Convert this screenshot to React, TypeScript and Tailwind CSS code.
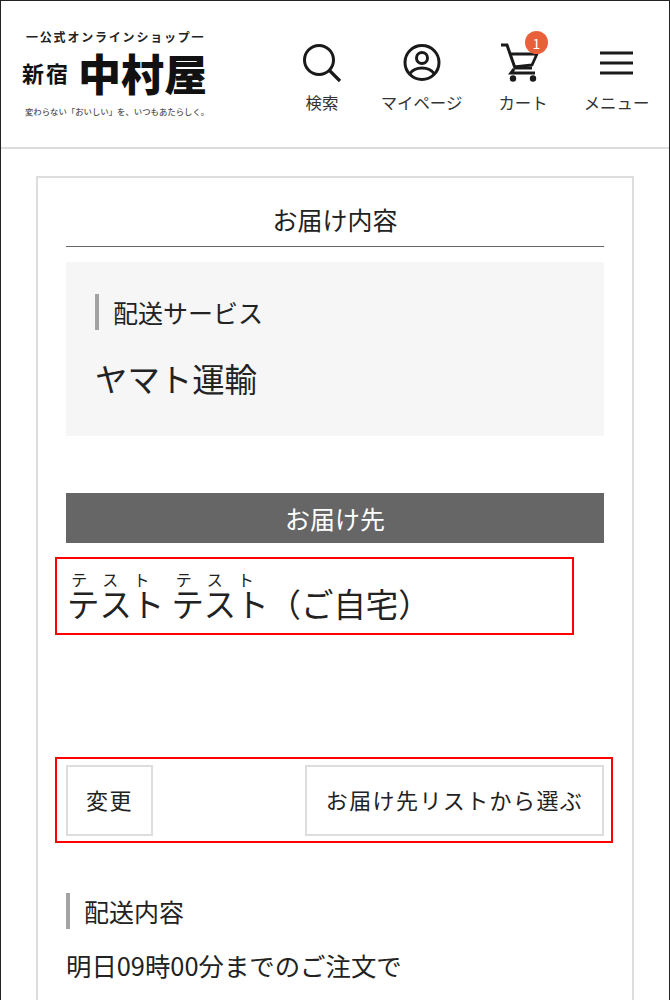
const FONT = "font-['Noto_Sans_CJK_JP','Noto_Sans',sans-serif]"

function SearchIcon() {
  return (
    <svg width="40" height="40" viewBox="0 0 40 40" fill="none" stroke="#1a1a1a" strokeWidth="3">
      <circle cx="17" cy="17" r="14.5" />
      <path d="M27 27 L38 38" strokeWidth="3.2" />
    </svg>
  )
}

function UserIcon() {
  return (
    <svg width="40" height="40" viewBox="0 0 40 40" fill="none" stroke="#1a1a1a" strokeWidth="3">
      <circle cx="20" cy="19.5" r="17" />
      <circle cx="20" cy="15" r="5.5" />
      <path d="M7.5 31 C11 26 16 25 20 25 C24 25 29 26 32.5 31" />
    </svg>
  )
}

function CartIcon() {
  return (
    <svg width="40" height="40" viewBox="3 0 40 40" fill="none" stroke="#1a1a1a" strokeWidth="3" className="overflow-visible">
      <path d="M1 2 H7 L15 25 H32" />
      <path d="M10 11 H37 L32 22 L14 24" strokeWidth="2.8" />
      <path d="M14 26 L11 30 H35" />
      <circle cx="13" cy="35.5" r="3.2" fill="#1a1a1a" stroke="none" />
      <circle cx="33" cy="35.5" r="3.2" fill="#1a1a1a" stroke="none" />
    </svg>
  )
}

function MenuIcon() {
  return (
    <svg width="40" height="40" viewBox="0 0 40 40" fill="none" stroke="#1a1a1a" strokeWidth="3">
      <path d="M3 10 H36 M3 20 H36 M3 30 H36" />
    </svg>
  )
}

function NavItem({ icon, label, badge, width }: { icon: React.ReactNode; label: string; badge?: string; width: string }) {
  return (
    <div className={`flex flex-col items-center ${width}`}>
      <div className="relative h-[40px]">
        {icon}
        {badge && (
          <span className="absolute -top-[12px] left-[22px] flex h-[23px] w-[23px] items-center justify-center rounded-full bg-[#e8603a] text-[14px] leading-none text-white">
            {badge}
          </span>
        )}
      </div>
      <span className="mt-[7px] whitespace-nowrap text-[16.4px] leading-[24px] text-[#333]">{label}</span>
    </div>
  )
}

function Logo() {
  return (
    <div className="flex w-[190px] flex-col text-[#111]">
      <p className="ml-[4px] whitespace-nowrap text-[12px] leading-[16px] font-bold tracking-[1.8px] text-[#222]">一公式オンラインショップ一</p>
      <div className="mt-[5px] flex h-[44px] items-center">
        <span className="text-[22px] font-bold leading-none tracking-[2px]">新宿</span>
        <span className="ml-[8px] text-[43px] leading-none font-black">中村屋</span>
      </div>
      <p className="mt-[11px] ml-[3px] whitespace-nowrap text-[8.4px] leading-[12px] font-medium text-[#555]">変わらない「おいしい」を、いつもあたらしく。</p>
    </div>
  )
}

function SideTitle({ children }: { children: React.ReactNode }) {
  return <h3 className="border-l-[4px] border-[#a3a3a3] pl-[14px] text-[25px] leading-[36px] text-[#222]">{children}</h3>
}

export default function App() {
  return (
    <div className={`${FONT} h-[1000px] overflow-hidden border-x border-t border-[#222] bg-white`}>
      <header className="flex h-[148px] items-start justify-between border-b-2 border-[#ddd] pl-[21px] pt-[28px]">
        <Logo />
        <nav className="flex items-start pt-[14px] pr-[20px]">
          <NavItem icon={<SearchIcon />} label="検索" width="w-[60px]" />
          <NavItem icon={<UserIcon />} label="マイページ" width="ml-[29px] w-[81px]" />
          <NavItem icon={<CartIcon />} label="カート" badge="1" width="ml-[36px] w-[50px]" />
          <NavItem icon={<MenuIcon />} label="メニュー" width="ml-[36px] w-[65px]" />
        </nav>
      </header>

      <main className="px-[35px] pt-[27px]">
        <section className="border-2 border-[#ddd] px-[28px] pb-[40px]">
          <h2 className="border-b border-[#666] pt-[23px] pb-[9px] text-center text-[25px] leading-[36px] text-[#222]">お届け内容</h2>

          <div className="mt-[15px] h-[174px] bg-[#f6f6f6] px-[29px] pt-[32px]">
            <SideTitle>配送サービス</SideTitle>
            <p className="mt-[22px] text-[32.4px] leading-[51px] text-[#222]">ヤマト運輸</p>
          </div>

          <h3 className="mt-[57px] h-[50px] bg-[#666] text-center text-[25px] leading-[50px] text-white">お届け先</h3>

          <div className="-mx-[11px] mt-[14px] h-[78px] w-[519px] border-2 border-[#f00] pl-[10px]">
            <p className="whitespace-nowrap pt-[20px] text-[32.4px] leading-[48px] text-[#222]">
              <ruby>
                テスト<rt className="pl-[4px] text-[16px] tracking-[14.5px]">テスト</rt>
              </ruby>{' '}
              <ruby>
                テスト<rt className="pl-[4px] text-[16px] tracking-[14.5px]">テスト</rt>
              </ruby>
              （ご自宅）
            </p>
          </div>

          <div className="-mx-[11px] mt-[122px] flex h-[86px] w-[558px] items-center justify-between border-2 border-[#f00] pl-[9px] pr-[7px]">
            <button className="h-[71px] w-[87px] border-2 border-[#ddd] pb-[2px] text-[22px] tracking-[1.4px] text-[#222]">変更</button>
            <button className="h-[71px] w-[299px] border-2 border-[#ddd] pb-[2px] text-[22px] tracking-[1.4px] whitespace-nowrap text-[#222]">お届け先リストから選ぶ</button>
          </div>

          <div className="mt-[50px]">
            <SideTitle>配送内容</SideTitle>
            <p className="mt-[18px] text-[25.4px] leading-[36px] text-[#222]">明日09時00分までのご注文で</p>
          </div>
        </section>
      </main>
    </div>
  )
}
